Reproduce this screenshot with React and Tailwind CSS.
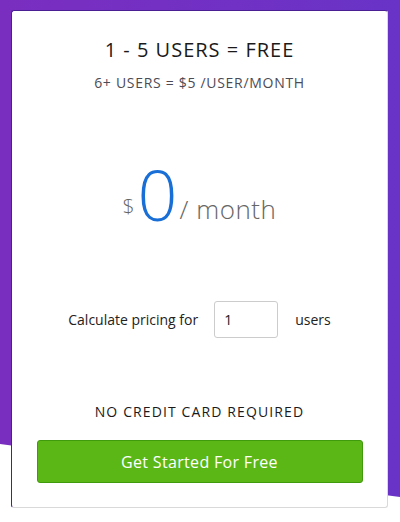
import React, { useState } from 'react';

export default function App() {
  const [users, setUsers] = useState('1');

  return (
    <div className="relative h-[522px] w-[400px] overflow-hidden bg-white font-['Open_Sans',sans-serif]">
      {/* purple slanted backdrop */}
      <div className="absolute inset-0 bg-[linear-gradient(90deg,#7a2ec0,#6933c7)] [clip-path:polygon(0_0,100%_0,100%_497px,0_444px)]" />

      <div className="relative px-[11px] pt-[10px]">
        <div className="flex h-[498px] w-[377px] flex-col items-center rounded-[3px] border border-[#d9d9d9] border-t-[#4a1f94] border-l-[#4a1f94] bg-white">
          <h1 className="mt-[27px] text-[20px] leading-6 tracking-[0.05em] text-[#1a1a1a]">1 - 5 USERS = FREE</h1>
          <p className="mt-[11px] text-[14px] leading-5 tracking-[0.05em] text-[#4b4b55]">6+ USERS = $5 /USER/MONTH</p>

          <div className="mt-[66px] flex items-end text-[#666]">
            <span className="mb-[12px] mr-[3px] text-[21px] font-light leading-none">$</span>
            <span className="text-[70px] font-light leading-none text-[#1a6fd6]">0</span>
            <span className="mb-[7px] ml-[2px] text-[26px] font-light leading-none tracking-[0.02em]">/ month</span>
          </div>

          <div className="mt-[72px] flex items-center text-[14px] text-[#222]">
            <span>Calculate pricing for</span>
            <input
              type="text"
              value={users}
              onChange={e => setUsers(e.target.value)}
              className="ml-[16px] mr-[17px] h-[37px] w-[64px] rounded-[3px] border border-[#ccc] px-[9px] text-[14px] outline-none"
            />
            <span>users</span>
          </div>

          <p className="mt-[63px] text-[14px] tracking-[0.08em] text-[#1a1a1a]">NO CREDIT CARD REQUIRED</p>

          <button className="mt-[18px] h-[43px] w-[326px] rounded-[3px] border border-[#3f9a0c] bg-[#5bb715] text-[16px] tracking-[0.02em] text-white">
            Get Started For Free
          </button>
        </div>
      </div>
    </div>
  );
}
